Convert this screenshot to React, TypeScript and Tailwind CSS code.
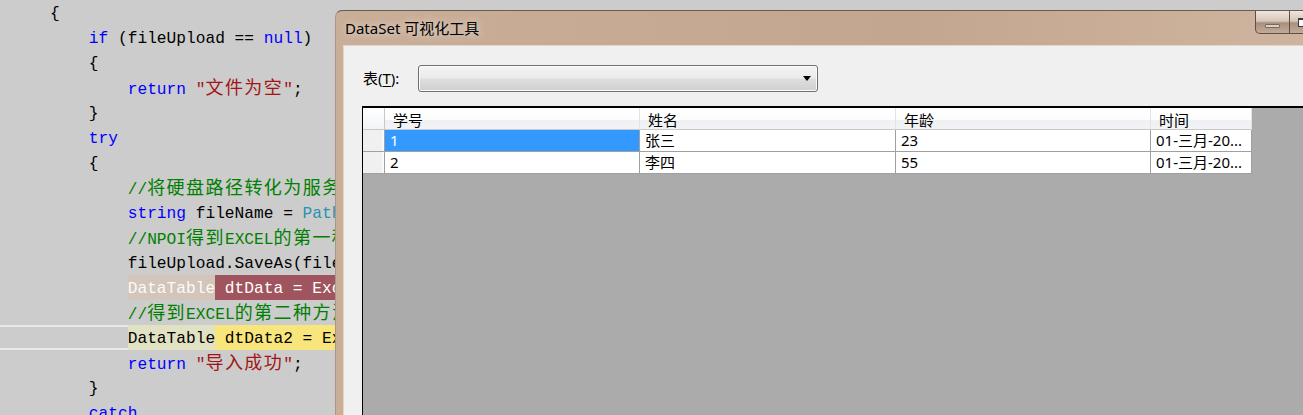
import React from "react";

type Tok = [string, string?];

const K = "text-[#0000ff]";
const S = "text-[#a31515]";
const C = "text-[#008000]";
const T = "text-[#2b91af]";

// CJK glyphs in the editor take two columns
function Mono({ text }: { text: string }) {
  const parts = text.split(/([\u3000-\u9fff\uff00-\uffef]+)/);
  return (
    <>
      {parts.map((p, i) =>
        /[\u3000-\u9fff\uff00-\uffef]/.test(p) ? (
          <span key={i} className="text-[18px] tracking-[1.45px]">
            {p}
          </span>
        ) : (
          <React.Fragment key={i}>{p}</React.Fragment>
        )
      )}
    </>
  );
}

const lines: [number, Tok[]][] = [
  [0, [["{"]]],
  [1, [["if", K], [" (fileUpload == "], ["null", K], [")"]]],
  [1, [["{"]]],
  [2, [["return", K], [" "], ['"文件为空"', S], [";"]]],
  [1, [["}"]]],
  [1, [["try", K]]],
  [1, [["{"]]],
  [2, [["//将硬盘路径转化为服务器路径", C]]],
  [2, [["string", K], [" fileName = "], ["Path", T], [".Combine(path, fileUpload.FileName);"]]],
  [2, [["//NPOI得到EXCEL的第一种方法", C]]],
  [2, [["fileUpload.SaveAs(fileName);"]]],
  [2, []],
  [2, [["//得到EXCEL的第二种方法", C]]],
  [2, []],
  [2, [["return", K], [" "], ['"导入成功"', S], [";"]]],
  [1, [["}"]]],
  [1, [["catch", K]]],
];

function CodeLine({ idx, indent, toks }: { idx: number; indent: number; toks: Tok[] }) {
  const pad = "    ".repeat(indent);
  if (idx === 11) {
    return (
      <div className="h-[25px] whitespace-pre pl-[50px] leading-[29px]">
        {pad}
        <span className="inline-block h-[25px] bg-[#d3c5b9] text-[#fafafa]">DataTable</span>
        <span className="inline-block h-[25px] bg-[#a0555e] pr-[40px] text-white"> dtData = ExcelHelper.Import(fileName);</span>
      </div>
    );
  }
  if (idx === 13) {
    return (
      <div className="h-[25px] whitespace-pre pl-[50px] leading-[29px] shadow-[inset_0_2px_0_#e9e9e9,inset_0_-2px_0_#e9e9e9]">
        {pad}
        <span className="inline-block h-[25px] bg-[#e1e1c3]">DataTable</span>
        <span className="inline-block h-[25px] bg-[#f8e67c] pr-[40px]"> dtData2 = ExcelHelper.Import2(fileName);</span>
      </div>
    );
  }
  return (
    <div className="h-[25px] whitespace-pre pl-[50px] leading-[29px]">
      {pad}
      {toks.map(([t, c], i) => (
        <span key={i} className={c}>
          <Mono text={t} />
        </span>
      ))}
    </div>
  );
}

const cols = ["学号", "姓名", "年龄", "时间"];
const widths = ["w-[255px]", "w-[256px]", "w-[255px]", "w-[101px]"];
const rows = [
  ["1", "张三", "23", "01-三月-20..."],
  ["2", "李四", "55", "01-三月-20..."],
];

export default function App() {
  return (
    <div className="relative h-[415px] w-[1303px] overflow-hidden bg-[#cccccc]">
      {/* editor */}
      <div className="font-['Liberation_Mono','Noto_Sans_CJK_SC',monospace] text-[16.2px] text-black">
        {lines.map(([ind, toks], i) => (
          <CodeLine key={i} idx={i} indent={ind} toks={toks} />
        ))}
      </div>

      {/* dialog window */}
      <div className="absolute left-[335px] top-[10px] flex h-[420px] w-[1035px] flex-col rounded-tl-[7px] border border-[#6a5a4f] border-l-[#a8968a] bg-[linear-gradient(90deg,#c9ae98,#c3a68f_55%,#d0b6a1)] font-['Noto_Sans','Noto_Sans_CJK_SC',sans-serif] text-black">
        <div className="flex h-[34px] shrink-0">
          <div className="flex flex-1 items-center pl-[9px] text-[15px] [text-shadow:0_0_8px_rgba(255,255,255,0.8)]">
            DataSet 可视化工具
          </div>
          <div className="mr-[6px] flex h-[23px]">
            <div className="flex w-[35px] items-end justify-center rounded-bl-[5px] border border-t-0 border-[#5e4e44] bg-[linear-gradient(180deg,#efe6de,#d7c6b9_45%,#a98f7d_55%,#c2ab9a)] pb-[5px]">
              <div className="h-[4px] w-[15px] rounded-[1px] border border-[#7a6a5e] bg-[#dcd0c6]" />
            </div>
            <div className="flex w-[26px] items-center justify-center border-b border-r border-[#5e4e44] bg-[linear-gradient(180deg,#efe6de,#d7c6b9_45%,#a98f7d_55%,#c2ab9a)]">
              <div className="h-[9px] w-[10px] border border-t-2 border-[#3c3c3c] bg-white" />
            </div>
            <div className="w-[47px] rounded-br-[5px] border-b border-r border-[#5e4e44] bg-[linear-gradient(180deg,#e9b3a6,#c9604a_50%,#b63a22_55%,#d0776a)]" />
          </div>
        </div>

        <div className="mx-[7px] flex-1 border-l border-t border-[#e2d5ca] bg-[#f0f0f0] pl-[18px] pt-[19px]">
          <div className="flex h-[27px] items-center">
            <span className="w-[56px] pl-[1px] text-[15px]">
              表(<span className="underline underline-offset-2">T</span>):
            </span>
            <div className="flex h-[27px] w-[400px] items-center justify-end rounded-[3px] border border-[#707070] bg-[linear-gradient(180deg,#f3f3f3_0%,#ebebeb_48%,#dedede_52%,#d0d0d0_100%)] pr-[6px] shadow-[inset_0_0_0_1px_#fbfbfb]">
              <div className="h-0 w-0 border-x-[4px] border-t-[5px] border-x-transparent border-t-black" />
            </div>
          </div>

          <div className="mt-[14px] h-[400px] border-l border-t-2 border-black bg-[#ababab] text-[15px]">
            <div className="flex h-[22px]">
              <div className="w-[22px] border-b border-r border-[#c8c8c8] bg-[linear-gradient(180deg,#ffffff,#f3f4f6)]" />
              {cols.map((c, i) => (
                <div
                  key={c}
                  className={`${widths[i]} flex items-end border-b border-r border-b-[#c8c8c8] border-r-[#e2e3e5] bg-[linear-gradient(180deg,#ffffff_0%,#fcfcfd_55%,#eef0f3_60%,#f2f3f5_100%)] pl-[8px] leading-[18px]`}
                >
                  {c}
                </div>
              ))}
            </div>
            {rows.map((r, ri) => (
              <div key={ri} className="flex h-[22px]">
                <div className="w-[22px] border-b border-r border-[#a0a0a0] bg-[#f0f0f0] shadow-[inset_-2px_0_0_#fafafa]" />
                {r.map((v, ci) => (
                  <div
                    key={ci}
                    className={`${widths[ci]} flex items-center overflow-hidden whitespace-nowrap border-b border-r border-[#a0a0a0] pl-[5px] ${
                      ri === 0 && ci === 0 ? "bg-[#3399ff] text-white" : "bg-white"
                    }`}
                  >
                    {v}
                  </div>
                ))}
              </div>
            ))}
          </div>
        </div>
      </div>
    </div>
  );
}
